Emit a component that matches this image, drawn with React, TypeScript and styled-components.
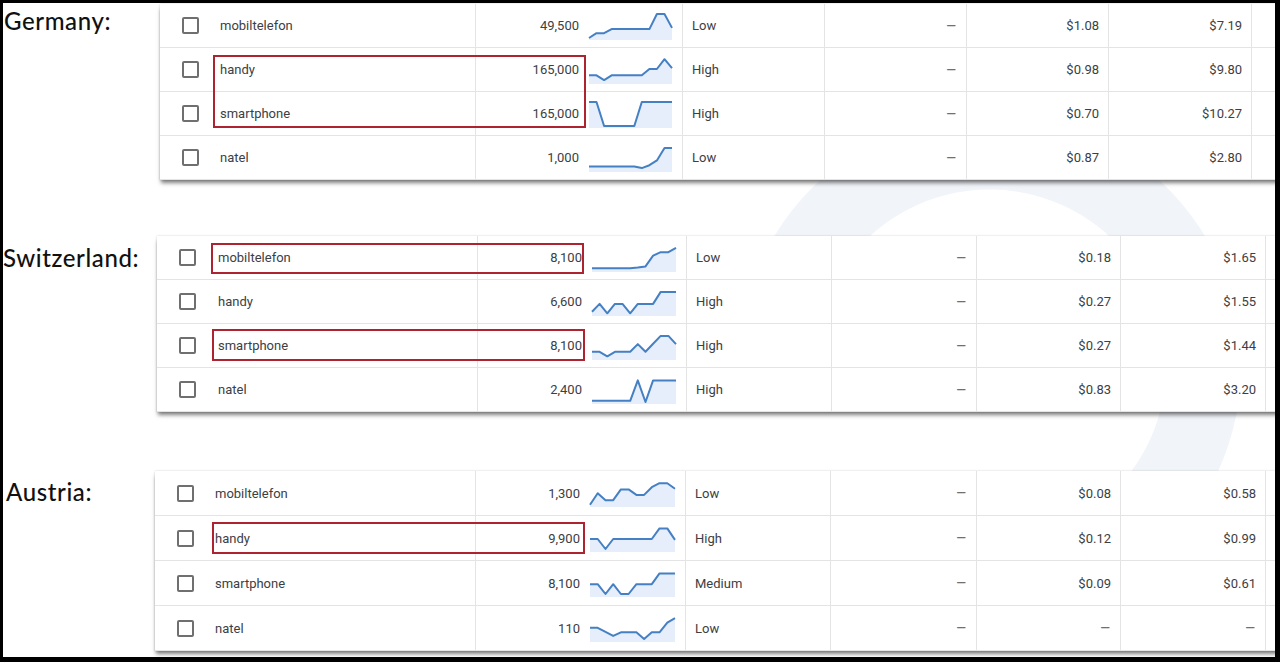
import React from 'react';
import styled, { createGlobalStyle } from 'styled-components';

interface Keyword {
  name: string;
  volume: string;
  trend: number[];
  competition: string;
  share: string;
  low: string;
  high: string;
}

interface Highlight {
  left: number;
  top: number;
  w: number;
  h: number;
}

interface CountryTable {
  country: string;
  labelWidth: number;
  indent: number;
  labelTop: number;
  gap: number;
  rowH: number;
  cols: string;
  sparkW: number;
  highlights: Highlight[];
  rows: Keyword[];
}

const GlobalStyle = createGlobalStyle`
  html, body {
    margin: 0;
    padding: 0;
    background: #000;
  }
  body {
    font-family: Roboto, "Liberation Sans", sans-serif;
  }
`;

const Frame = styled.div`
  position: relative;
  margin: 3px 5px 0 3px;
  width: 1272px;
  height: 654px;
  background: #fff;
  overflow: hidden;
`;

const Watermark = styled.svg`
  position: absolute;
  inset: 0;
  z-index: 0;
`;

const Section = styled.section<{ $gap: number }>`
  position: relative;
  z-index: 1;
  display: flex;
  align-items: flex-start;
  margin-top: ${(p) => p.$gap}px;
`;

const Label = styled.div<{ $width: number; $indent: number; $top: number }>`
  flex: 0 0 ${(p) => p.$width}px;
  box-sizing: border-box;
  padding: ${(p) => p.$top}px 0 0 ${(p) => p.$indent}px;
  font-family: Lato, "Open Sans", sans-serif;
  font-weight: 500;
  font-size: 24px;
  line-height: 28px;
  letter-spacing: 0.6px;
  color: #111;
`;

const Card = styled.div`
  position: relative;
  flex: 0 0 1140px;
  background: #fff;
  box-shadow: 0 4px 4px -1px rgba(0, 0, 0, 0.5), 0 0 2px rgba(0, 0, 0, 0.18);
`;

const Row = styled.div<{ $cols: string; $h: number }>`
  display: grid;
  grid-template-columns: ${(p) => p.$cols};
  height: ${(p) => p.$h}px;
  box-sizing: border-box;
  border-bottom: 1px solid #e4e4e4;
  font-size: 13px;
  color: #3c4043;
`;

const CheckCell = styled.div`
  display: flex;
  align-items: center;
  padding-left: 22px;
`;

const Checkbox = styled.span`
  width: 17px;
  height: 17px;
  box-sizing: border-box;
  border: 2px solid #6f6f6f;
  border-radius: 2px;
`;

const KeywordCell = styled.div`
  display: flex;
  align-items: center;
  border-right: 1px solid #e4e4e4;
`;

const VolumeCell = styled.div`
  display: flex;
  align-items: center;
  justify-content: flex-end;
  gap: 9px;
  padding-right: 9px;
  border-right: 1px solid #e4e4e4;
`;

const TextCell = styled.div<{ $align: 'left' | 'right' }>`
  display: flex;
  align-items: center;
  justify-content: ${(p) => (p.$align === 'right' ? 'flex-end' : 'flex-start')};
  padding: 0 9px;
  border-right: 1px solid #e4e4e4;
`;

const Dash = styled.span`
  font-size: 17px;
  color: #707070;
`;

const Filler = styled.div``;

const Box = styled.div<{ $left: number; $top: number; $w: number; $h: number }>`
  position: absolute;
  left: ${(p) => p.$left}px;
  top: ${(p) => p.$top}px;
  width: ${(p) => p.$w}px;
  height: ${(p) => p.$h}px;
  box-sizing: border-box;
  border: 2px solid #ad2430;
  pointer-events: none;
`;

const Spark: React.FC<{ points: number[]; width: number }> = ({ points, width }) => {
  const h = 28;
  const step = (width - 2) / (points.length - 1);
  const xy = points.map((v, i) => [1 + i * step, 2 + (1 - v) * (h - 4)]);
  const line = xy.map(([x, y], i) => `${i ? 'L' : 'M'}${x.toFixed(1)},${y.toFixed(1)}`).join(' ');
  const area = `M1,${h} ${xy.map(([x, y]) => `L${x.toFixed(1)},${y.toFixed(1)}`).join(' ')} L${width - 1},${h} Z`;
  return (
    <svg width={width} height={h} viewBox={`0 0 ${width} ${h}`} style={{ display: 'block' }}>
      <path d={area} fill="#e5eefa" />
      <path d={line} fill="none" stroke="#4580c4" strokeWidth={2} strokeLinejoin="round" />
    </svg>
  );
};

const isDash = (s: string) => s === '–';

const tables: CountryTable[] = [
  {
    country: 'Germany:',
    labelWidth: 157,
    indent: 1,
    labelTop: 3,
    gap: 1,
    rowH: 44,
    cols: '60px 256px 207px 142px 142px 142px 143px 1fr',
    sparkW: 85,
    highlights: [{ left: 53, top: 51, w: 373, h: 73 }],
    rows: [
      { name: 'mobiltelefon', volume: '49,500', trend: [0, 0.2, 0.2, 0.37, 0.37, 0.37, 0.37, 0.37, 0.37, 1, 1, 0.42], competition: 'Low', share: '–', low: '$1.08', high: '$7.19' },
      { name: 'handy', volume: '165,000', trend: [0.28, 0.28, 0.08, 0.28, 0.28, 0.28, 0.28, 0.28, 0.54, 0.54, 0.95, 0.58], competition: 'High', share: '–', low: '$0.98', high: '$9.80' },
      { name: 'smartphone', volume: '165,000', trend: [1, 1, 0, 0, 0, 0, 0, 1, 1, 1, 1, 1], competition: 'High', share: '–', low: '$0.70', high: '$10.27' },
      { name: 'natel', volume: '1,000', trend: [0.15, 0.15, 0.15, 0.15, 0.15, 0.15, 0.15, 0.08, 0.2, 0.4, 0.92, 0.92], competition: 'Low', share: '–', low: '$0.87', high: '$2.80' },
    ],
  },
  {
    country: 'Switzerland:',
    labelWidth: 154,
    indent: 0,
    labelTop: 8,
    gap: 56,
    rowH: 44,
    cols: '61px 260px 209px 145px 145px 144px 145px 1fr',
    sparkW: 86,
    highlights: [
      { left: 54, top: 7, w: 373, h: 31 },
      { left: 55, top: 93, w: 373, h: 32 },
    ],
    rows: [
      { name: 'mobiltelefon', volume: '8,100', trend: [0.07, 0.07, 0.07, 0.07, 0.07, 0.07, 0.1, 0.15, 0.6, 0.74, 0.74, 0.92], competition: 'Low', share: '–', low: '$0.18', high: '$1.65' },
      { name: 'handy', volume: '6,600', trend: [0.09, 0.42, 0.03, 0.42, 0.42, 0.03, 0.42, 0.42, 0.42, 0.92, 0.92, 0.92], competition: 'High', share: '–', low: '$0.27', high: '$1.55' },
      { name: 'smartphone', volume: '8,100', trend: [0.26, 0.26, 0.07, 0.26, 0.26, 0.26, 0.58, 0.26, 0.59, 0.92, 0.92, 0.58], competition: 'High', share: '–', low: '$0.27', high: '$1.44' },
      { name: 'natel', volume: '2,400', trend: [0.05, 0.05, 0.05, 0.05, 0.05, 0.05, 0.9, 0, 0.9, 0.9, 0.9, 0.9], competition: 'High', share: '–', low: '$0.83', high: '$3.20' },
    ],
  },
  {
    country: 'Austria:',
    labelWidth: 152,
    indent: 3,
    labelTop: 7,
    gap: 59,
    rowH: 45,
    cols: '60px 261px 210px 145px 146px 144px 145px 1fr',
    sparkW: 87,
    highlights: [{ left: 57, top: 51, w: 373, h: 32 }],
    rows: [
      { name: 'mobiltelefon', volume: '1,300', trend: [0.01, 0.49, 0.2, 0.2, 0.65, 0.65, 0.42, 0.42, 0.74, 0.91, 0.91, 0.68], competition: 'Low', share: '–', low: '$0.08', high: '$0.58' },
      { name: 'handy', volume: '9,900', trend: [0.46, 0.46, 0.04, 0.46, 0.46, 0.46, 0.46, 0.46, 0.46, 0.9, 0.9, 0.42], competition: 'High', share: '–', low: '$0.12', high: '$0.99' },
      { name: 'smartphone', volume: '8,100', trend: [0.45, 0.45, 0.04, 0.45, 0.04, 0.04, 0.45, 0.45, 0.45, 0.9, 0.9, 0.9], competition: 'Medium', share: '–', low: '$0.09', high: '$0.61' },
      { name: 'natel', volume: '110', trend: [0.51, 0.51, 0.34, 0.17, 0.32, 0.32, 0.32, 0.04, 0.32, 0.32, 0.72, 0.91], competition: 'Low', share: '–', low: '–', high: '–' },
    ],
  },
];

const Amount: React.FC<{ value: string }> = ({ value }) =>
  isDash(value) ? <Dash>{value}</Dash> : <span>{value}</span>;

const App: React.FC = () => {
  return (
    <>
      <GlobalStyle />
      <Frame>
        <Watermark width="1272" height="654">
          {/* faint ring from the background logo */}
          <path
            d="M776,325 A214,214 0 1 1 1151,500"
            fill="none"
            stroke="#f1f4f9"
            strokeWidth={75}
          />
        </Watermark>
        {tables.map((t) => (
          <Section key={t.country} $gap={t.gap}>
            <Label $width={t.labelWidth} $indent={t.indent} $top={t.labelTop}>
              {t.country}
            </Label>
            <Card>
              {t.rows.map((r) => (
                <Row key={r.name} $cols={t.cols} $h={t.rowH}>
                  <CheckCell>
                    <Checkbox />
                  </CheckCell>
                  <KeywordCell>{r.name}</KeywordCell>
                  <VolumeCell>
                    <span>{r.volume}</span>
                    <Spark points={r.trend} width={t.sparkW} />
                  </VolumeCell>
                  <TextCell $align="left">{r.competition}</TextCell>
                  <TextCell $align="right">
                    <Amount value={r.share} />
                  </TextCell>
                  <TextCell $align="right">
                    <Amount value={r.low} />
                  </TextCell>
                  <TextCell $align="right">
                    <Amount value={r.high} />
                  </TextCell>
                  <Filler />
                </Row>
              ))}
              {t.highlights.map((b, i) => (
                <Box key={i} $left={b.left} $top={b.top} $w={b.w} $h={b.h} />
              ))}
            </Card>
          </Section>
        ))}
      </Frame>
    </>
  );
};

export default App;
